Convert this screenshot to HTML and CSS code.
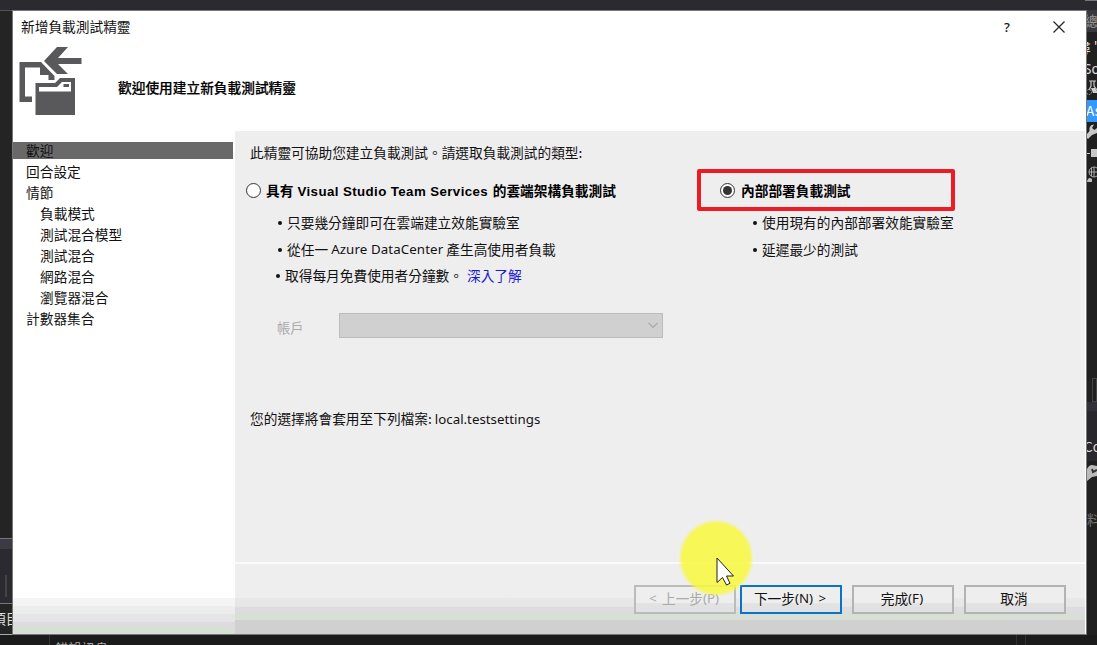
FILE: index.html
```html
<!DOCTYPE html>
<html lang="zh-TW">
<head>
<meta charset="utf-8">
<title>新增負載測試精靈</title>
<link rel="stylesheet" href="styles.css">
</head>
<body>
<div class="desktop">
  <div class="top-edge"><i></i></div>
  <div class="middle">
    <div class="left-edge">
      <div class="left-editor"></div>
      <div class="left-panel"><i></i></div>
      <div class="left-tab">項目</div>
    </div>
    <main class="dialog">
      <header class="header">
        <div class="titlebar">
          <span class="title">新增負載測試精靈</span>
          <span class="help">?</span>
          <svg class="close" width="12" height="12" viewBox="0 0 12 12"><path d="M.5.5l11 11M11.5.5l-11 11" stroke="#222" stroke-width="1.2"/></svg>
        </div>
        <div class="hero">
          <svg class="logo" width="64" height="70" viewBox="0 0 64 70">
            <g fill="#59595b">
              <path d="M38 1H49L39 12H62.500V18H39L49 28H38L25 15Z"/>
              <path d="M.5 16H22L35.500 30V34H29.500V29H21V21.500H6V50.500H13V56H.5Z"/>
              <path fill-rule="evenodd" d="M16.500 37H36L41 32H56V69H16.500ZM20 41V45.500H52V36H43L38 41ZM44.500 38H50V41H44.500Z"/>
            </g>
          </svg>
          <h1>歡迎使用建立新負載測試精靈</h1>
        </div>
      </header>
      <div class="body">
        <nav class="steps">
          <div class="step current">歡迎</div>
          <div class="step">回合設定</div>
          <div class="step">情節</div>
          <div class="step sub">負載模式</div>
          <div class="step sub">測試混合模型</div>
          <div class="step sub">測試混合</div>
          <div class="step sub">網路混合</div>
          <div class="step sub">瀏覽器混合</div>
          <div class="step">計數器集合</div>
        </nav>
        <section class="pane">
          <div class="content">
            <p class="intro">此精靈可協助您建立負載測試。請選取負載測試的類型:</p>
            <div class="choices">
              <div class="choice cloud">
                <div class="option"><span class="radio"></span><b>具有 <span class="product">Visual Studio Team Services</span> 的雲端架構負載測試</b></div>
                <div class="point"><i></i>只要幾分鐘即可在雲端建立效能實驗室</div>
                <div class="point"><i></i>從任一 <span class="latin azure">Azure DataCenter</span> 產生高使用者負載</div>
                <div class="point last"><i></i>取得每月免費使用者分鐘數。<a>深入了解</a></div>
              </div>
              <div class="choice local">
                <div class="option marked"><span class="radio on"></span><b>內部部署負載測試</b></div>
                <div class="point"><i></i>使用現有的內部部署效能實驗室</div>
                <div class="point"><i></i>延遲最少的測試</div>
              </div>
            </div>
            <div class="account">
              <label>帳戶</label>
              <div class="select"><svg width="12" height="7" viewBox="0 0 12 7"><path d="M1.5 1L6 5.5L10.5 1" fill="none" stroke="#aaa" stroke-width="1.2"/></svg></div>
            </div>
            <p class="file">您的選擇將會套用至下列檔案: <span class="latin">local.testsettings</span></p>
          </div>
          <footer class="footer">
            <div class="button disabled"><span class="latin">&lt; </span>上一步<span class="latin">(P)</span></div>
            <div class="button primary">下一步<span class="latin">(N) &gt;</span></div>
            <div class="button">完成<span class="latin">(F)</span></div>
            <div class="button">取消</div>
          </footer>
        </section>
      </div>
      <div class="spotlight"></div>
      <svg class="cursor" width="20" height="30" viewBox="0 0 20 30"><path d="M1 1V25.500L6.500 20.500L10.500 28L14 26.300L10.500 19H17.500Z" fill="#fff" stroke="#222" stroke-width="1"/></svg>
    </main>
    <div class="right-edge">
      <div class="r-title">總</div>
      <div class="r-search">尋 "</div>
      <div class="r-line">So</div>
      <svg width="10" height="20" viewBox="0 0 10 20"><path d="M2 2H9M4 2V7L2 11M7 2V7L10 11" fill="none" stroke="#c8c8c8" stroke-width="1.2"/><path d="M4 9H8L10 12V14H6Z" fill="#ccc"/><circle cx="2" cy="13" r="2.500" fill="none" stroke="#aaa" stroke-dasharray="1.500 1"/></svg>
      <div class="r-selected">As</div>
      <svg width="10" height="22" viewBox="0 0 10 22"><path d="M0 12L2.500 9Q1.500 3 7 2.500L5 6L7.500 8L10 6V11L5 13L1 17L0 16Z" fill="#c8c8c8"/></svg>
      <svg width="10" height="20" viewBox="0 0 10 20"><path d="M0 9H3V10H0ZM4 5H10V13H4Z" fill="#c8c8c8"/></svg>
      <svg width="10" height="22" viewBox="0 0 10 22"><circle cx="7" cy="8" r="5" fill="none" stroke="#aaa"/><path d="M2 8H10M7 3V13M4.500 4V12" stroke="#aaa"/><path d="M0 18Q1 12 5 15V18Z" fill="#bbb"/></svg>
      <div class="r-space"></div>
      <div class="r-box"></div>
      <div class="r-bar"></div>
      <div class="r-text">Co</div>
      <svg width="10" height="24" viewBox="0 0 10 24"><path d="M0 18V8Q2 4 5 4L10 5V15L5 16L0 20Z" fill="#bbb"/><path d="M5 8L6 11L10 9" fill="none" stroke="#333" stroke-width="2"/></svg>
      <div class="r-faded">料</div>
    </div>
  </div>
  <div class="bottom-edge"><i></i><span>錯誤訊息</span><b></b></div>
</div>
</body>
</html>
```
FILE: styles.css
```css
* { box-sizing: border-box; }
body { margin: 0; }
p, h1 { margin: 0; }
.desktop {
  width: 1097px; height: 645px; overflow: hidden;
  display: flex; flex-direction: column;
  background: #202021; color: #111;
  font: 13.7px/20px "Noto Sans CJK TC", "Noto Sans", sans-serif;
  white-space: nowrap;
}
.top-edge { height: 10px; flex: none; background: #2b2a30; display: flex; justify-content: flex-end; }
.top-edge i { width: 12px; height: 1px; background: #777; }
.middle { height: 625px; flex: none; display: flex; }

.left-edge { width: 12px; overflow: hidden; border-top: 1px solid #555; background: #242424; color: #ddd; flex: none; }
.left-editor { height: 527px; }
.left-panel { height: 66px; border-top: 1px solid #777; border-bottom: 1px solid #777; background: linear-gradient(#3b3b43 10px, #2b2a30 10px); padding: 36px 0 0 5px; }
.left-panel i { display: block; width: 2px; height: 22px; background: #444; }
.left-tab { height: 31px; padding-top: 4px; margin-left: -8px; border-bottom: 1px solid #aaa; }

.dialog { position: relative; width: 1075px; height: 625px; flex: none; display: flex; flex-direction: column; border: 1px solid #777; background: #fff; }
.header { height: 120px; flex: none; }
.titlebar { display: flex; align-items: center; height: 32px; padding: 0 21px 0 8px; }
.title { flex: 1; padding-bottom: 2px; }
.help { width: 8px; margin-right: 41px; font: 500 13px "Noto Sans", sans-serif; }
.close { display: block; }
.hero { display: flex; padding: 3px 0 0 6px; }
.logo { display: block; margin-right: 35px; }
h1 { padding-top: 31px; font-size: 13.7px; line-height: 20px; font-weight: 500; color: #000; -webkit-text-stroke: .2px #000; }

.body { display: flex; height: 503px; }
.steps { width: 222px; padding: 11px 2px 0 0; background: linear-gradient(#fff 467px, #f5f5f5 467px, #f4f4f4 475px, #ededed 475px, #ececec 483px, #e4e5e4 483px, #e4e5e4 491px, #dfdae1 491px, #dfdbe1 495px, #d7dfd7 495px); }
.step { height: 21px; padding-left: 13px; }
.current { height: 17px; margin-bottom: 2px; line-height: 17px; background: #696969; }
.sub { padding-left: 27px; }

.pane { flex: 1; margin-right: 1px; background: linear-gradient(#efeeef 467px, #e7e8e8 467px, #e5e6e5 476px, #dedbe1 476px, #dfdce1 481px, #d7dfd7 481px, #d7dfd7 489px, #d0d0d0 489px); }
.content { height: 431px; padding: 11px 0 0 15px; }
.choices { display: flex; height: 138px; padding-top: 7px; }
.choice { flex: none; }
.cloud { width: 447px; }
.local { width: 280px; }
.option { display: flex; align-items: center; height: 42px; gap: 5px; color: #000; }
.cloud .option { margin-left: -4px; }
.option b { font-weight: 700; white-space: pre; }
.cloud b { padding-top: 1px; }
.local b { padding-left: 1px; }
.product { font-family: "Liberation Sans", sans-serif; font-size: 13.3px; letter-spacing: .4px; margin: 0 1.500px 0 1px; }
.radio { width: 15px; height: 15px; border: 1px solid #333; border-radius: 50%; background: #fff; display: grid; place-items: center; }
.radio.on::after { content: ""; width: 9px; height: 9px; border-radius: 50%; background: #333; }
.marked { width: 258px; padding-left: 19px; border: 4px solid #ed1c24; border-radius: 2px; }
.point { display: flex; align-items: center; height: 26.500px; margin-top: -2px; margin-bottom: 2px; white-space: pre; }
.point i { width: 4px; height: 4px; margin: 2px 5px 0 28px; border-radius: 50%; background: #111; }
.point.last i { margin-left: 26px; }
.local .point i { margin-left: 56px; margin-right: 5px; }
.point a { color: #1b1bd0; margin-left: 4px; }
.latin { font-family: "Noto Sans", sans-serif; font-size: 13.3px; }
.azure { letter-spacing: .1px; }
.account { display: flex; height: 25px; margin: 13px 0 0 27px; color: #aaa; }
.account label { width: 62px; padding-top: 5px; font-size: 13.3px; }
.select { width: 324px; height: 25px; border: 1px solid #bcbcbc; background: #d0d0d0; display: flex; align-items: center; justify-content: flex-end; padding-right: 3px; }
.file { margin-top: 70px; }
.footer { height: 72px; border-top: 2px solid #fafafa; display: flex; padding: 21px 0 0 399px; }
.button { width: 102px; height: 29px; padding: 0 2px 3px 0; border: 2px solid #b3b3b3; display: flex; align-items: center; justify-content: center; background: linear-gradient(#eee 65%, #e2e3e2 65%, #e1e0e3); margin-right: 10px; white-space: pre; }
.disabled { color: #aaa; margin-right: 4px; border-color: #bbb; }
.disabled .latin:first-child, .primary .latin { word-spacing: 2px; }
.primary { border-color: #0874c9; }

.spotlight { position: absolute; left: 665px; top: 508px; width: 76px; height: 78px; border-radius: 50%; background: radial-gradient(closest-side, rgba(248,248,62,.86) 88%, rgba(248,248,62,0)); }
.cursor { position: absolute; left: 703px; top: 546px; }

.right-edge { width: 10px; flex: none; overflow: hidden; background: #202021; color: #ddd; display: flex; flex-direction: column; }
.right-edge > * { flex: none; display: block; }
.r-title { height: 22px; margin-left: -3px; background: #39383e; color: #999; }
.r-search { height: 25px; padding-top: 5px; margin-left: -10px; }
.r-line { height: 22px; padding-top: 2px; margin-left: -3px; font-family: "Noto Sans", sans-serif; }
.r-selected { height: 22px; text-indent: -1px; margin-top: 1px; background: #3399ff; color: #fff; }
.r-space { height: 192px; }
.r-box { height: 24px; margin-left: 5px; border: 1px solid #444; }
.r-bar { height: 9px; background: #323139; }
.r-text { height: 50px; padding-top: 25px; margin-left: -3px; background: #28272b; }
.r-faded { margin-top: 24px; color: #777; }
.bottom-edge { height: 10px; flex: none; overflow: hidden; display: flex; background: #1b1b1c; color: #aaa; }
.bottom-edge i { width: 50px; border-right: 1px solid #343434; }
.bottom-edge span { padding: 4px 0 0 5px; flex: 1; font-size: 13.3px; }
.bottom-edge b { width: 10px; margin-right: 71px; border: 1px solid #303035; border-width: 0 1px; }
```
